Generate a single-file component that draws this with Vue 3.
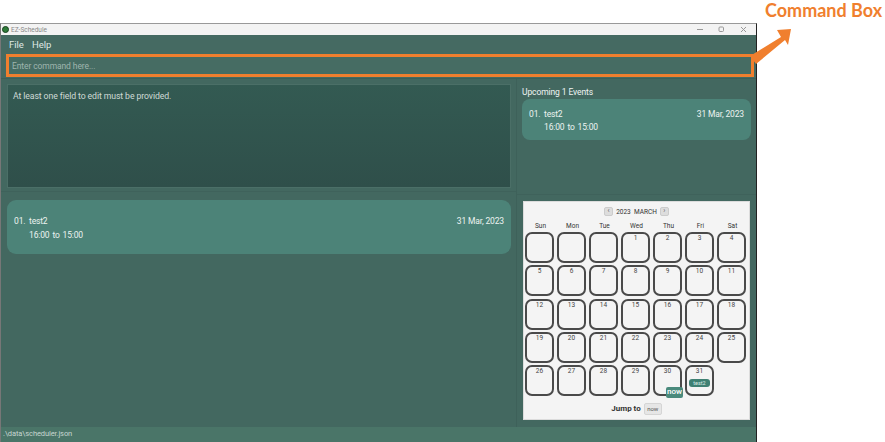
<template>
  <div class="page">
    <div class="window">
      <div class="titlebar">
        <span class="app-icon"></span>
        <span class="app-title">EZ-Schedule</span>
        <div class="win-btns">
          <svg width="60" height="11" viewBox="0 0 60 11">
            <path d="M5 5.5h6" stroke="#999" fill="none" />
            <rect x="27" y="3" width="4.5" height="4.5" rx="1" stroke="#999" fill="none" />
            <path d="M49 3l5 5M54 3l-5 5" stroke="#999" fill="none" />
          </svg>
        </div>
      </div>
      <div class="menubar">
        <span>File</span>
        <span>Help</span>
      </div>
      <div class="command-row">
        <div class="command-box">Enter command here...</div>
      </div>
      <div class="main">
        <div class="left">
          <div class="result-wrap">
            <div class="result">At least one field to edit must be provided.</div>
          </div>
          <div class="list-wrap">
            <div class="event-card big">
              <div class="line"><span class="idx">01.</span><span>test2</span><span class="date">31 Mar, 2023</span></div>
              <div class="line second">16:00 to 15:00</div>
            </div>
          </div>
        </div>
        <div class="right">
          <div class="upcoming">
            <div class="up-title">Upcoming 1 Events</div>
            <div class="event-card small">
              <div class="line"><span class="idx">01.</span><span>test2</span><span class="date">31 Mar, 2023</span></div>
              <div class="line second">16:00 to 15:00</div>
            </div>
          </div>
          <div class="cal-wrap">
            <div class="calendar">
              <div class="cal-head">
                <span class="nav">‹</span>
                <span>2023&nbsp; MARCH</span>
                <span class="nav">›</span>
              </div>
              <div class="dow">
                <span v-for="d in days" :key="d">{{ d }}</span>
              </div>
              <div class="grid">
                <div v-for="(c, i) in cells" :key="i" class="cell">
                  <template v-if="c > 0">{{ c }}</template>
                  <span v-if="c === 31" class="tag">test2</span>
                  <span v-if="c === 30" class="now-badge">now</span>
                </div>
              </div>
              <div class="jump">
                <b>Jump to</b>
                <span class="now-btn">now</span>
              </div>
            </div>
          </div>
        </div>
      </div>
      <div class="status">.\data\scheduler.json</div>
    </div>
    <div class="note">Command Box</div>
    <svg class="arrow" width="46" height="40" viewBox="0 0 46 40">
      <path d="M1 30L32 11L28 4L42 3L39 19L36 14L7 38Z" fill="#f07f2e" />
    </svg>
  </div>
</template>

<script setup>
const days = ['Sun', 'Mon', 'Tue', 'Wed', 'Thu', 'Fri', 'Sat']
// the first three boxes of March are empty
const cells = [0, 0, 0]
for (let i = 1; i <= 31; i++) cells.push(i)
</script>

<style scoped>
* { box-sizing: border-box; }
.page { position: relative; width: 885px; height: 442px; background: #fff; padding-top: 23px; font-family: Roboto, sans-serif; }
.window { width: 757px; height: 419px; border-left: 1px solid #777; border-top: 1px solid #999; border-right: 1px solid #222; display: flex; flex-direction: column; background: #436860; }
.titlebar { height: 11px; background: #f3f3f3; display: flex; align-items: center; padding-left: 1px; flex-shrink: 0; }
.app-icon { width: 7px; height: 7px; border-radius: 50%; background: #2f7d3a; border: 1px solid #173f1d; }
.app-title { font-size: 6.500px; color: #888; margin-left: 2px; }
.win-btns { margin-left: auto; margin-right: 4px; display: flex; }
.menubar { height: 18px; display: flex; align-items: center; gap: 8px; padding-left: 8px; font-size: 9.500px; color: #dfe8e5; background: #456a62; flex-shrink: 0; }
.command-row { height: 26px; padding: 1px 2px 2px 5px; flex-shrink: 0; background: #456a62; border-bottom: 1px solid #3d5f58; }
.command-box { height: 23px; border: 3px solid #f07f2e; background: #466c63; color: #9fb5ae; font-size: 8.500px; letter-spacing: -.1px; padding-left: 3px; display: flex; align-items: center; }
.main { flex: 1; display: flex; min-height: 0; }
.left { width: 516px; display: flex; flex-direction: column; border-right: 1px solid #3e615a; }
.result-wrap { height: 113px; padding: 5px 5px 4px 6px; border-bottom: 1px solid #3f625b; }
.result { height: 104px; border: 1px solid #4b6f67; background: linear-gradient(#335a52, #2f4f4a); color: #cfdad6; font-size: 8.700px; letter-spacing: -.1px; padding: 6px 5px; }
.list-wrap { flex: 1; padding: 8px 5px 8px 6px; }
.event-card { background: #4c8378; color: #edf3f1; font-size: 8.500px; letter-spacing: -.15px; }
.big { height: 54px; border-radius: 9px; padding: 14px 7px 0 7px; }
.big .line { height: 14px; }
.small { height: 41px; border-radius: 8px; padding: 8px 7px 0 7px; }
.line { display: flex; height: 13px; align-items: center; }
.idx { width: 15px; }
.date { margin-left: auto; }
.second { padding-left: 15px; word-spacing: 1px; }
.right { flex: 1; display: flex; flex-direction: column; }
.upcoming { height: 116px; padding: 7px 5px 0 5px; border-bottom: 1px solid #3f625b; }
.up-title { color: #f0f4f3; font-size: 8.500px; letter-spacing: -.1px; height: 13px; line-height: 12px; }
.cal-wrap { flex: 1; padding: 6px 6px 6px 6px; }
.calendar { height: 219px; background: #f4f4f4; border: 1px solid #dcdcdc; padding: 4px 1px 0 1px; color: #333; }
.cal-head { height: 11px; display: flex; justify-content: center; align-items: center; gap: 3px; font-size: 6.500px; }
.nav { width: 9px; height: 9px; background: #ddd; border: 1px solid #ccc; border-radius: 2px; font-size: 7px; line-height: 6px; text-align: center; color: #666; }
.dow { display: grid; grid-template-columns: repeat(7, 29px); column-gap: 3px; justify-content: center; height: 13px; margin-top: 2px; font-size: 6.500px; text-align: center; align-items: center; color: #333; }
.grid { display: grid; grid-template-columns: repeat(7, 29px); grid-auto-rows: 31px; column-gap: 3px; row-gap: 2.250px; }
.cell { position: relative; border: 2px solid #4a4a4a; border-radius: 7px; font-size: 6.500px; text-align: center; padding-top: 0; color: #444; }
.tag { position: absolute; left: 2px; right: 2px; top: 12px; height: 8px; border-radius: 3px; background: #3f8073; color: #dcebe7; font-size: 5.500px; line-height: 8px; }
.now-badge { position: absolute; right: -3px; bottom: -4px; width: 17px; height: 11px; background: #4a8a7c; color: #fff; font-size: 8px; font-weight: 500; line-height: 10px; border-radius: 2px; }
.jump { display: flex; justify-content: center; align-items: center; gap: 3px; height: 13px; margin-top: 6px; font-size: 8px; color: #333; }
.now-btn { width: 18px; height: 12px; border: 1px solid #d5d5d5; background: #e6e6e6; border-radius: 2px; font-size: 6px; text-align: center; line-height: 10px; color: #555; }
.status { height: 15px; background: #4a7568; color: #c6d6d1; font-size: 7.500px; letter-spacing: -.1px; padding-left: 2px; line-height: 14px; flex-shrink: 0; }
.note { position: absolute; left: 765px; top: 1px; font-size: 18px; line-height: 18px; font-weight: 700; font-family: Lato, sans-serif; color: #f07f2e; white-space: nowrap; }
.arrow { position: absolute; left: 749px; top: 26px; }
</style>
